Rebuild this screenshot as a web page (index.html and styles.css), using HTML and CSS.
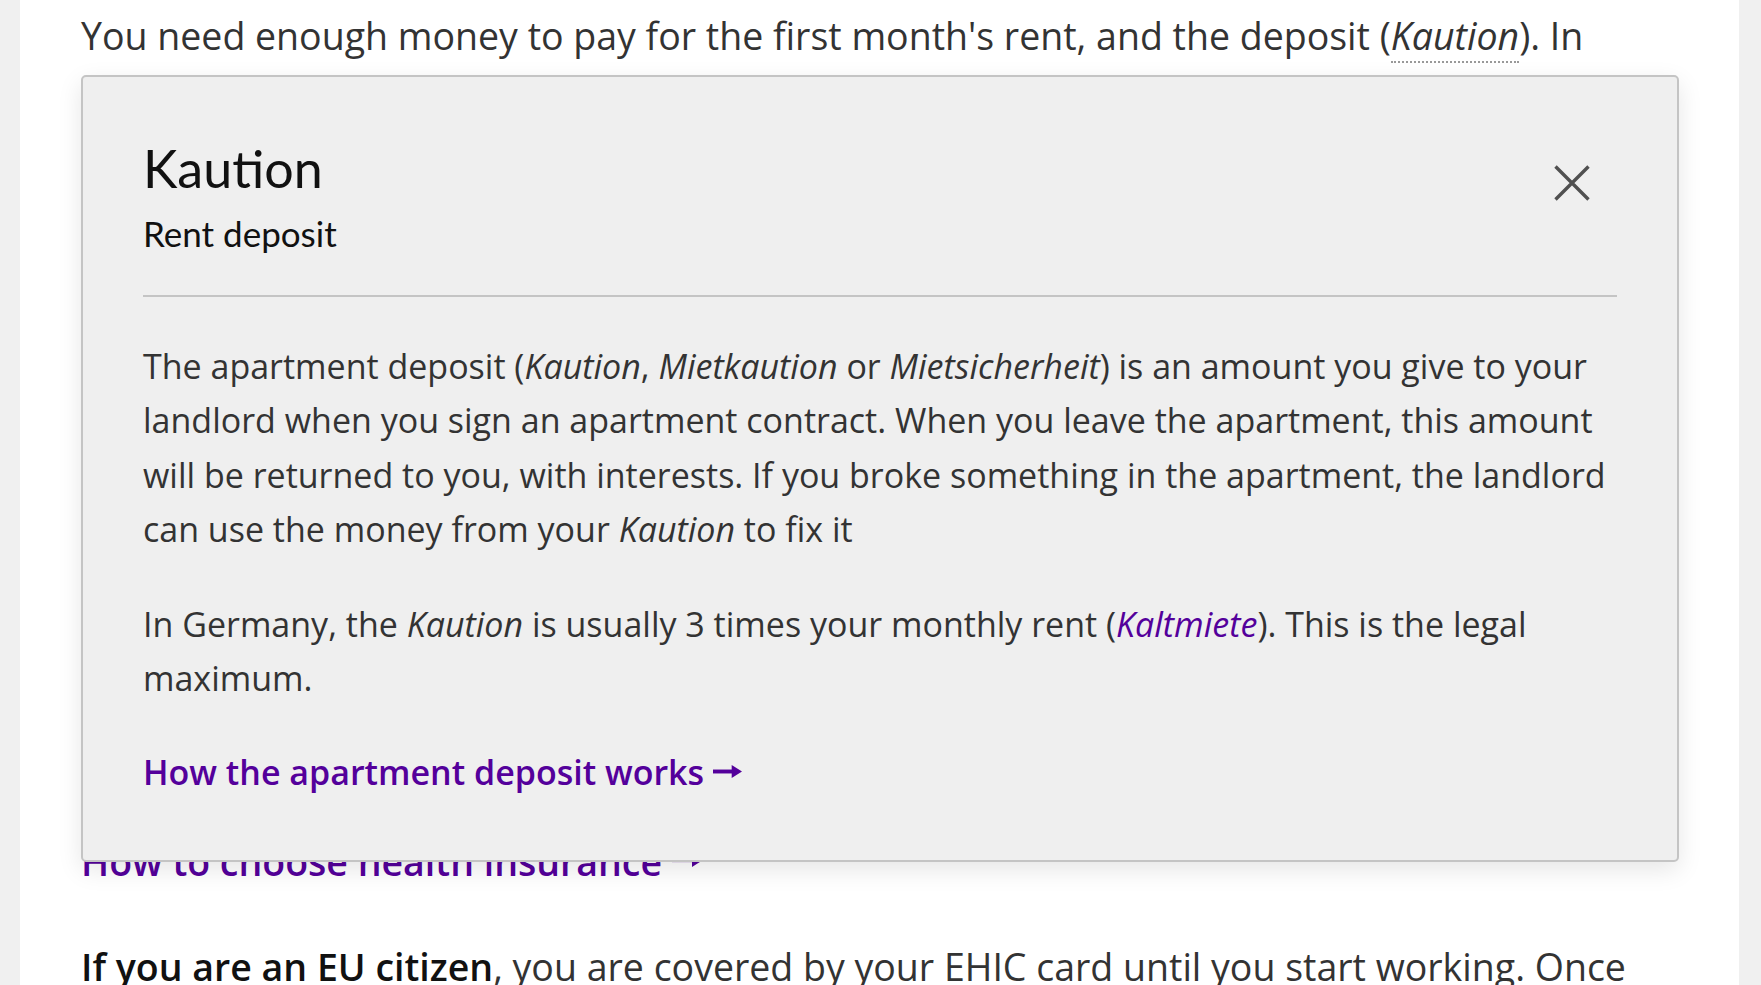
FILE: index.html
```html
<!DOCTYPE html>
<html lang="en">
<head>
<meta charset="utf-8">
<title>Kaution</title>
<link rel="stylesheet" href="styles.css">
</head>
<body>
<main class="page">
  <article class="content">
    <p class="text">You need enough money to pay for the first month's rent, and the deposit (<abbr class="term">Kaution</abbr>). In most cities, you also need proof of income and a copy of your passport.</p>
    <ul class="text list">
      <li>A copy of your passport or ID card</li>
      <li>Your last three payslips</li>
      <li>A work contract, if you just started a new job</li>
      <li>A credit report (<em>SCHUFA</em>)</li>
      <li>A certificate from your previous landlord</li>
      <li>A rent guarantee, if you are a student</li>
      <li>Proof that you have no rent debt</li>
      <li>A residence permit, if you need one</li>
      <li>Your registration certificate</li>
      <li>Your bank details for the rent payments</li>
      <li>Health insurance, from your first day in Germany</li>
    </ul>
    <p class="text"><a class="link" href="#">How to choose health insurance <svg class="arrow" width="31" height="16" viewBox="0 0 31 16" aria-hidden="true"><path d="M0 8 H22" stroke="currentColor" stroke-width="4.2"/><path d="M20 1 L31 8 L20 15 Z" fill="currentColor"/></svg></a></p>
    <p class="text"><strong class="strong">If you are an EU citizen</strong>, you are covered by your EHIC card until you start working. Once</p>

    <aside class="glossary">
      <header class="glossary-head">
        <div class="glossary-titles">
          <h2 class="glossary-title">Kaution</h2>
          <p class="glossary-sub">Rent deposit</p>
        </div>
        <button class="close" aria-label="Close">
          <svg width="36" height="36" viewBox="0 0 36 36" aria-hidden="true"><path d="M1.5 1.5 L34.5 34.5 M34.5 1.5 L1.5 34.5" stroke="#505050" stroke-width="3.4" fill="none"/></svg>
        </button>
      </header>
      <div class="glossary-body">
        <p class="gp">The apartment deposit (<em>Kaution</em>, <em>Mietkaution</em> or <em>Mietsicherheit</em>) is an amount you give to your landlord when you sign an apartment contract. When you leave the apartment, this amount will be returned to you, with interests. If you broke something in the apartment, the landlord can use the money from your <em>Kaution</em> to fix it</p>
        <p class="gp">In Germany, the <em>Kaution</em> is usually 3 times your monthly rent (<a class="inline-link" href="#"><em>Kaltmiete</em></a>). This is the legal maximum.</p>
        <p class="gp gp-link"><a class="link" href="#">How the apartment deposit works <svg class="arrow arrow-sm" width="29" height="15" viewBox="0 0 31 16" aria-hidden="true"><path d="M0 8 H22" stroke="currentColor" stroke-width="4.2"/><path d="M20 1 L31 8 L20 15 Z" fill="currentColor"/></svg></a></p>
      </div>
    </aside>
  </article>
</main>
</body>
</html>
```
FILE: styles.css
```css
html, body {
  margin: 0;
  padding: 0;
  background: #f0f0f0;
}
body {
  font-family: "Open Sans", "Noto Sans", sans-serif;
  color: #333;
  height: 985px;
  overflow: hidden;
}
.page {
  margin: 0 22px 0 20px;
  background: #fff;
  min-height: 985px;
  padding: 8px 60px 0 61px;
  box-sizing: border-box;
}
.content {
  position: relative;
}
.text {
  font-size: 37.5px;
  line-height: 56px;
  margin: 0 0 49px;
}
.list {
  padding-left: 40px;
}
.term {
  font-style: italic;
  text-decoration: none;
  border-bottom: 2px dotted #999;
}
.strong {
  font-weight: 600;
  color: #111;
}
.link {
  color: #54009b;
  font-weight: 600;
  text-decoration: none;
}
.arrow {
  display: inline-block;
  vertical-align: 0.22em;
}
.arrow-sm {
  vertical-align: 0.2em;
}
.glossary {
  position: absolute;
  top: 67px;
  left: 0;
  right: 0;
  background: #efefef;
  border: 2px solid #c4c4c4;
  border-radius: 5px;
  box-shadow: 0 8px 24px rgba(0, 0, 0, 0.10);
  padding: 60px 60px 60px;
}
.glossary-head {
  display: flex;
  justify-content: space-between;
  align-items: flex-start;
  border-bottom: 2px solid #c4c4c4;
  padding-bottom: 37px;
}
.glossary-titles {
  display: flex;
  flex-direction: column;
}
.glossary-title {
  font-family: Lato, sans-serif;
  font-weight: 400;
  font-size: 52px;
  line-height: 62px;
  margin: 0;
  color: #111;
}
.glossary-sub {
  font-family: Lato, sans-serif;
  font-size: 35px;
  line-height: 50px;
  margin: 9px 0 0;
  color: #111;
}
.close {
  background: none;
  border: 0;
  padding: 0;
  margin: 28px 27px 0 0;
  width: 36px;
  height: 36px;
  display: flex;
}
.glossary-body {
  padding-top: 42px;
}
.gp {
  font-size: 34px;
  line-height: 54.4px;
  margin: 0 0 40px;
}
.gp-link {
  margin: 0;
}
.inline-link {
  color: #54009b;
  text-decoration: none;
}
```
